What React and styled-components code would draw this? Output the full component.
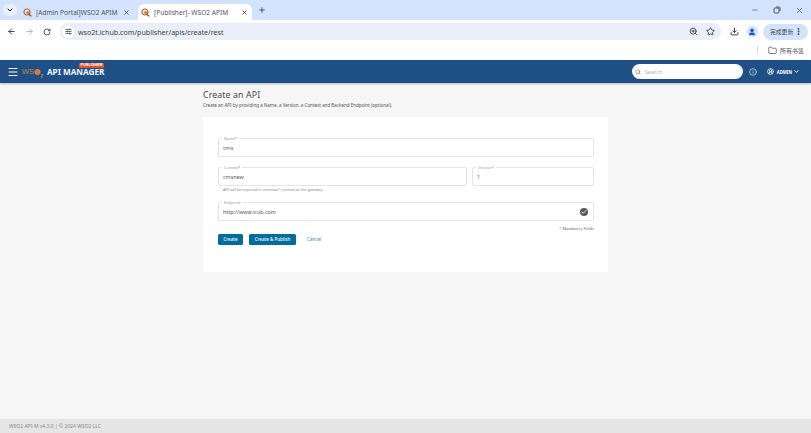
import React from 'react';
import styled, { createGlobalStyle } from 'styled-components';
import { ChevronDown, X, Plus, ArrowLeft, ArrowRight, RotateCw, SlidersHorizontal, ZoomIn, Star, Download, User, EllipsisVertical, Minus, Folder, Menu, Search, Info, CircleUserRound, Check } from 'lucide-react';

const Global = createGlobalStyle`
  html, body { margin: 0; padding: 0; background: #f6f6f6; }
  * { box-sizing: border-box; }
  body { font-family: "Liberation Sans", Arial, sans-serif; overflow: hidden; }
`;
const Page = styled.div`width: 811px; height: 433px; display: flex; flex-direction: column; overflow: hidden;`;

const TabStrip = styled.div`height: 20px; background: #d3e3fd; display: flex; align-items: flex-end; padding-left: 3px;`;
const TabMenu = styled.div`width: 14px; height: 12px; margin: 0 3px 4px 0; border-radius: 5px; background: #e7eefc; display: flex; align-items: center; justify-content: center; color: #1f1f1f;`;
const Tab = styled.div`
  width: 114px; height: 16px; margin-right: 4px; display: flex; align-items: center; padding: 0 4.5px 0 2.5px;
  border-radius: 6px 6px 0 0; background: ${p => p.$active ? '#ffffff' : 'transparent'};
`;
const TabTitle = styled.span`flex: 1; margin-left: 4.5px; font: 6.6px "Noto Sans", sans-serif; color: #555; white-space: nowrap;`;
const AddTab = styled.div`margin: 0 0 4px 2px; height: 12px; display: flex; align-items: center; color: #3c4043;`;
const WinControls = styled.div`margin-left: auto; align-self: flex-start; display: flex; gap: 14px; padding: 6px 7px 0 0; color: #555;`;

const Toolbar = styled.div`height: 20px; background: #fff; display: flex; align-items: center; padding: 3px 3px 0 7px; color: #555;`;
const NavButtons = styled.div`display: flex; gap: 9px; align-items: center; margin-right: 9px;`;
const Omnibox = styled.div`width: 661px; height: 17px; background: #e9eef8; border-radius: 9px; display: flex; align-items: center; padding: 0 6.5px 0 2px;`;
const SiteIcon = styled.div`width: 12px; height: 12px; background: #fff; border-radius: 50%; display: flex; align-items: center; justify-content: center; color: #333;`;
const Url = styled.span`margin-left: 4px; font: 7.1px "Noto Sans", sans-serif; color: #444; flex: 1;`;
const OmniIcons = styled.div`display: flex; gap: 8px; color: #333; align-items: center;`;
const ToolRight = styled.div`margin-left: 8.5px; display: flex; align-items: center; gap: 8px; color: #333;`;
const Avatar = styled.div`width: 11px; height: 11px; border-radius: 50%; background: #d3e3fd; color: #0b57d0; display: flex; align-items: center; justify-content: center;`;
const UpdateButton = styled.div`
  margin-left: 5.5px; width: 45px; height: 16px; border-radius: 8px; background: #d3e3fd; display: flex; align-items: center;
  gap: 1px; padding-left: 7px; font: 5.8px "Noto Sans CJK SC", sans-serif; color: #444;
`;
const BookmarkBar = styled.div`height: 20px; background: #fff; display: flex; align-items: center; justify-content: flex-end; padding-right: 7px; gap: 3px; font: 6px "Noto Sans CJK SC", sans-serif; color: #555;`;
const BookmarkDivider = styled.div`width: 1px; height: 8px; background: #c9dcf8; margin-right: 7px;`;

const AppBar = styled.header`height: 23px; background: #1f5085; display: flex; align-items: center; padding: 0 11px 0 7px; color: #fff; box-shadow: 0 1px 2px rgba(0,0,0,.25); position: relative;`;
const Logo = styled.div`position: relative; margin-left: 3px; display: flex; align-items: center; height: 23px;`;
const LogoMark = styled.span`font: 400 7.4px "Liberation Sans", sans-serif; color: #c98a4e;`;
const LogoName = styled.span`margin-left: 3px; font: 700 8.2px "Noto Sans", sans-serif; color: #f2f5f9; white-space: nowrap;`;
const Badge = styled.span`position: absolute; left: 57px; top: 3px; height: 5px; width: 25px; background: #e4512a; border-radius: 1px; font: 700 3.8px/5px "Liberation Sans", sans-serif; color: #fff; text-align: center;`;
const SearchBox = styled.div`margin-left: auto; width: 111px; height: 15px; border-radius: 8px; background: #fff; display: flex; align-items: center; padding-left: 3px; gap: 4px; color: #777; font: 5.6px "Noto Sans", sans-serif;`;
const SearchHint = styled.span`color: #b5b5b5;`;
const AppIcons = styled.div`display: flex; align-items: center; margin-left: ${p => p.$gap}px; color: #fff;`;
const UserLabel = styled.span`margin: 0 1px 0 3px; font: 700 4.3px "Noto Sans", sans-serif;`;

const Main = styled.main`flex: 1; background: #f6f6f6; padding: 6.5px 203px 0; width: 811px;`;
const Title = styled.h1`margin: 0; font: 400 8.8px/11px "Noto Sans", sans-serif; color: #4a4a4a; letter-spacing: .1px;`;
const Subtitle = styled.p`margin: 1.5px 0 0; font: 4.5px/6px "Noto Sans", sans-serif; color: #555; white-space: nowrap;`;
const Card = styled.section`margin-top: 9px; width: 405px; height: 155px; background: #fff; padding: 21px 14px 0 15px; display: flex; flex-direction: column;`;
const Row = styled.div`display: flex; gap: 5px; margin-top: 10px;`;
const FieldBox = styled.div`
  position: relative; height: 19px; border: 1px solid #e4e4e4; border-radius: 2px; width: ${p => p.$w}px; flex: none;
  margin-top: ${p => p.$top || 0}px;
  display: flex; align-items: center; justify-content: space-between; padding: 0 5px 0 4px;
  font: 5.4px "Noto Sans", sans-serif; color: #555;
`;
const FieldLabel = styled.span`position: absolute; left: 3px; top: -3px; padding: 0 2px; background: #fff; font: 3.9px/5px "Noto Sans", sans-serif; color: #999;`;
const Req = styled.span`color: #e4512a;`;
const Helper = styled.div`margin: 1px 0 0 5px; font: 3.8px/6px "Noto Sans", sans-serif; color: #888;`;
const CheckDot = styled.div`width: 8px; height: 8px; border-radius: 50%; background: #5a5a5a; color: #fff; display: flex; align-items: center; justify-content: center;`;
const Mandatory = styled.div`margin-top: 5px; width: 376px; text-align: right; font: 3.9px/6px "Noto Sans", sans-serif; color: #666;`;
const Actions = styled.div`margin-top: 2px; display: flex; align-items: center; gap: 6px;`;
const PrimaryButton = styled.button`
  width: ${p => p.$w}px; height: 11px; border: 0; padding: 0; border-radius: 1.5px; background: #026c9c; color: #fff;
  font: 500 4.5px/11px "Noto Sans", sans-serif; text-align: center;
`;
const LinkButton = styled.span`margin: -1px 0 0 5px; font: 4.6px "Noto Sans", sans-serif; color: #4a87ac;`;
const Footer = styled.footer`height: 14px; background: #e5e5e5; padding-left: 9px; display: flex; align-items: center; font: 4.9px "Noto Sans", sans-serif; color: #888; letter-spacing: .06px;`;

const Favicon = () => (
  <svg width="9" height="9" viewBox="0 0 9 9" style={{ flex: 'none' }}>
    <circle cx="4" cy="4" r="3" fill="#f7f0e8" stroke="#a06a3f" strokeWidth="1.2" />
    <circle cx="4.6" cy="4.4" r="1.5" fill="#e9722e" />
    <path d="M6 6.2 8.3 8.4" stroke="#6d4a30" strokeWidth="1.2" />
  </svg>
);

export default function App() {
  return (
    <Page>
      <Global />
      <TabStrip>
        <TabMenu><ChevronDown size={8} strokeWidth={3} /></TabMenu>
        <Tab><Favicon /><TabTitle>[Admin Portal]WSO2 APIM</TabTitle><X size={7} strokeWidth={2.5} color="#333" /></Tab>
        <Tab $active><Favicon /><TabTitle>[Publisher]- WSO2 APIM</TabTitle><X size={7} strokeWidth={2.5} color="#333" /></Tab>
        <AddTab><Plus size={8} strokeWidth={2.5} /></AddTab>
        <WinControls>
          <Minus size={8} />
          <svg width="8" height="8" viewBox="0 0 8 8" fill="none" stroke="currentColor"><rect x="1" y="2" width="5" height="5" rx="1" /><path d="M3 1h3a1 1 0 0 1 1 1v3" /></svg>
          <X size={9} />
        </WinControls>
      </TabStrip>
      <Toolbar>
        <NavButtons>
          <ArrowLeft size={9} strokeWidth={2.4} color="#333" />
          <ArrowRight size={9} strokeWidth={2.2} color="#aaa" />
          <RotateCw size={8} strokeWidth={2.4} color="#333" />
        </NavButtons>
        <Omnibox>
          <SiteIcon><SlidersHorizontal size={7} strokeWidth={2.5} /></SiteIcon>
          <Url>wso2t.ichub.com/publisher/apis/create/rest</Url>
          <OmniIcons><ZoomIn size={9} strokeWidth={2.2} /><Star size={9} strokeWidth={2.2} /></OmniIcons>
        </Omnibox>
        <ToolRight>
          <Download size={9} strokeWidth={2.4} />
          <Avatar><User size={8} strokeWidth={3} fill="#0b57d0" /></Avatar>
        </ToolRight>
        <UpdateButton>完成更新<EllipsisVertical size={9} strokeWidth={3} /></UpdateButton>
      </Toolbar>
      <BookmarkBar>
        <BookmarkDivider />
        <Folder size={9} strokeWidth={1.8} color="#444" />
        <span>所有书签</span>
      </BookmarkBar>
      <AppBar>
        <Menu size={12} strokeWidth={2} />
        <Logo>
          <LogoMark>WS</LogoMark>
          <svg width="10" height="12" viewBox="0 0 10 12">
            <circle cx="3.5" cy="6" r="2.6" fill="#e9722e" stroke="#c98a4e" />
            <path d="M7 8.6h2l-2 2.6h2.2" fill="none" stroke="#c98a4e" strokeWidth=".8" />
          </svg>
          <LogoName>API MANAGER</LogoName>
          <Badge>PUBLISHER</Badge>
        </Logo>
        <SearchBox><Search size={6} strokeWidth={2.5} /><SearchHint>Search</SearchHint></SearchBox>
        <AppIcons $gap={6}>
          <Info size={8} strokeWidth={1.8} />
        </AppIcons>
        <AppIcons $gap={10}>
          <CircleUserRound size={7} strokeWidth={2.5} />
          <UserLabel>ADMIN</UserLabel>
          <ChevronDown size={7} strokeWidth={3} />
        </AppIcons>
      </AppBar>
      <Main>
        <Title>Create an API</Title>
        <Subtitle>Create an API by providing a Name, a Version, a Context and Backend Endpoint (optional).</Subtitle>
        <Card>
          <FieldBox $w={376}>
            <FieldLabel>Name<Req>*</Req></FieldLabel>
            cms
          </FieldBox>
          <Row>
            <FieldBox $w={249}>
              <FieldLabel>Context<Req>*</Req></FieldLabel>
              cmsnew
            </FieldBox>
            <FieldBox $w={122}>
              <FieldLabel>Version<Req>*</Req></FieldLabel>
              1
            </FieldBox>
          </Row>
          <Helper>API will be exposed in cmsnew/1 context at the gateway</Helper>
          <FieldBox $w={376} $top={9}>
            <FieldLabel>Endpoint</FieldLabel>
            http://www.icub.com
            <CheckDot><Check size={6} strokeWidth={3.5} /></CheckDot>
          </FieldBox>
          <Mandatory><Req>*</Req> Mandatory Fields</Mandatory>
          <Actions>
            <PrimaryButton $w={25}>Create</PrimaryButton>
            <PrimaryButton $w={47}>Create &amp; Publish</PrimaryButton>
            <LinkButton>Cancel</LinkButton>
          </Actions>
        </Card>
      </Main>
      <Footer>WSO2 API-M v4.3.0 | © 2024 WSO2 LLC</Footer>
    </Page>
  );
}
